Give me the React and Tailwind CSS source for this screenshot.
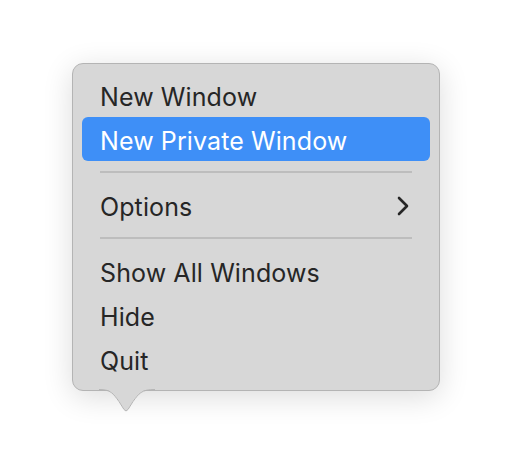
import { Fragment } from 'react';

const groups = [
  [{ label: 'New Window' }, { label: 'New Private Window', active: true }],
  [{ label: 'Options', submenu: true }],
  [{ label: 'Show All Windows' }, { label: 'Hide' }, { label: 'Quit' }],
];

function Chevron() {
  return (
    <svg width="12" height="20" viewBox="0 0 12 20" fill="none" className="shrink-0 -mt-[4px]">
      <path d="M2 2 L10 10 L2 18" stroke="#262626" strokeWidth="2.6" strokeLinecap="round" strokeLinejoin="round" />
    </svg>
  );
}

// little pointer under the popover
function Tail() {
  return (
    <svg
      width="56"
      height="25"
      viewBox="0 0 56 25"
      className="absolute left-[26px] top-full -mt-[1px]"
    >
      <path d="M0 0 C12 0 14 4 20 12 L25 20 Q27 23 29 20 L34 12 C40 4 42 0 56 0 Z" fill="#d7d7d7" />
      <path d="M0 0.5 C12 0.5 14 4.5 20 12.5 L25 20.5 Q27 23.5 29 20.5 L34 12.5 C40 4.5 42 0.5 56 0.5" fill="none" stroke="#b4b4b4" strokeWidth="1" />
    </svg>
  );
}

export default function App() {
  return (
    <div className="w-[512px] h-[472px] bg-white pt-[63px] pl-[72px]" style={{ fontFamily: 'Inter, "Noto Sans", sans-serif' }}>
      <div className="relative w-[368px] rounded-[11px] border border-[#b4b4b4] bg-[#d7d7d7] p-[9px] shadow-[0_6px_30px_rgba(0,0,0,0.14)]">
        {groups.map((group, gi) => (
          <Fragment key={gi}>
            {gi > 0 && <div className="mx-[18px] my-[10px] h-[2px] bg-[#bdbdbd]" />}
            {group.map((item) => (
              <div
                key={item.label}
                className={`flex h-[44px] items-center justify-between rounded-[6px] pl-[18px] pr-[21px] pt-[6px] text-[25px] tracking-[0.1px] ${
                  item.active ? 'bg-[#3e8ff7] text-white' : 'text-[#262626]'
                }`}
              >
                <span>{item.label}</span>
                {item.submenu && <Chevron />}
              </div>
            ))}
          </Fragment>
        ))}
        <Tail />
      </div>
    </div>
  );
}
